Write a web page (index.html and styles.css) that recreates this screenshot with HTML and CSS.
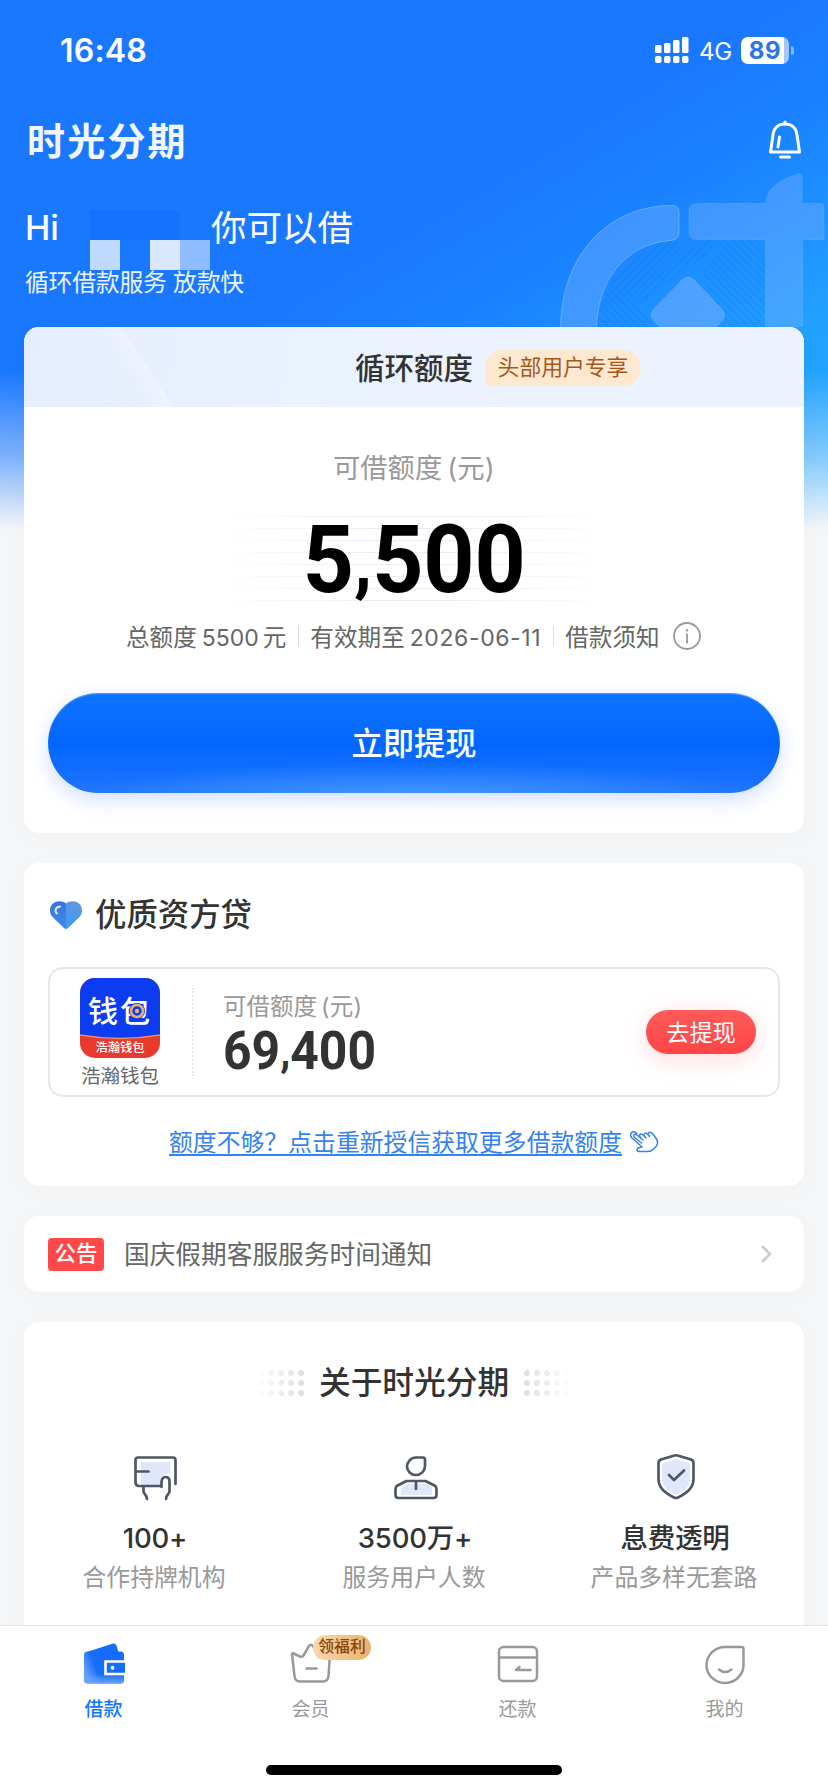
FILE: index.html
```html
<!DOCTYPE html>
<html lang="zh-CN">
<head>
<meta charset="utf-8">
<title>时光分期</title>
<link rel="stylesheet" href="styles.css">
</head>
<body>
<main class="screen">
  <div class="backdrop"></div>
  <svg class="hero-art" viewBox="558 170 270 157" width="270" height="157">
    <defs>
      <pattern id="hatchA" width="5.500" height="5.500" patternUnits="userSpaceOnUse" patternTransform="rotate(45)"><rect width="2.2" height="5.500" fill="#0b6ef5" opacity=".18"/></pattern>
      <pattern id="hatchB" width="5.500" height="5.500" patternUnits="userSpaceOnUse" patternTransform="rotate(-45)"><rect width="2.2" height="5.500" fill="#0b6ef5" opacity=".18"/></pattern>
    </defs>
    <path d="M612 285C626 258 648 242 675 241L727 240L636 306Z" fill="url(#hatchA)"/>
    <path d="M702 272L727 240H766V327H597C597 310 603 298 612 285L636 306L655 327H720Z" fill="url(#hatchB)"/>
    <g fill="#7fb2ff" fill-opacity=".38" stroke="#8cc4ff" stroke-opacity=".55">
      <path d="M560.500 330C560.500 258 605 206 672 205.500Q679 205.500 679 212V232Q679 240 670 240.500C626 244 596.500 280 596.500 330Z"/>
      <path d="M697 203.500H766C767 187 780 180 798 174Q802 173 802 178V203.500H820Q824 203.500 824 207V239.500H802.500V330H765.500V239.500H697Q689 239.500 689 232V211Q689 203.500 697 203.500Z" stroke-opacity=".25"/>
      <path d="M682 280Q688 274 694 280L722 309Q727 315 722 321L694 349H682L654 321Q648 315 654 309Z" fill-opacity=".5" stroke-opacity=".3"/>
    </g>
  </svg>

  <header class="status">
    <span class="clock">16:48</span>
    <div class="status-right">
      <svg width="34" height="28" viewBox="0 0 34 28" fill="#fff">
        <rect x="0" y="9" width="6.500" height="8" rx="1.500"/><rect x="9" y="7" width="6.500" height="10" rx="1.500"/><rect x="18" y="4" width="6.500" height="13" rx="1.500"/><rect x="27" y="1" width="6.500" height="16" rx="1.500"/>
        <rect x="0" y="20" width="6.500" height="7" rx="2"/><rect x="9" y="20" width="6.500" height="7" rx="2"/><rect x="18" y="20" width="6.500" height="7" rx="2"/><rect x="27" y="20" width="6.500" height="7" rx="2"/>
      </svg>
      <span class="net">4G</span>
      <div class="battery"><span>89</span></div>
      <i class="nub"></i>
    </div>
  </header>

  <div class="brand-row">
    <h1 class="brand">时光分期</h1>
    <svg width="34" height="42" viewBox="0 0 34 42" fill="none" stroke="#fff" stroke-width="3" stroke-linecap="round" stroke-linejoin="round">
      <path d="M17 2V4"/><path d="M17 4C9.500 4 5.500 9 5 15L2.500 32H31.500L29 15C28.500 9 24.500 4 17 4Z"/><path d="M11.500 17L10 27"/><path d="M12.500 37H21.500"/>
    </svg>
  </div>

  <div class="greeting">
    <span>Hi</span>
    <svg class="mask" width="120" height="60" viewBox="0 0 120 60">
      <rect width="90" height="30" fill="#1472ff"/><rect y="30" width="30" height="30" fill="#c0d9ff"/><rect x="60" y="30" width="30" height="30" fill="#d9e7ff"/><rect x="90" y="30" width="30" height="30" fill="#90bdff"/>
    </svg>
    <span class="can">你可以借</span>
  </div>
  <p class="slogan">循环借款服务 放款快</p>

  <div class="cards">
    <section class="card credit">
      <div class="credit-head">
        <h2>循环额度</h2><span class="tag">头部用户专享</span>
      </div>
      <p class="credit-label">可借额度<span class="paren">(元)</span></p>
      <div class="amount"><span>5<small>,</small>500</span></div>
      <div class="meta">
        <span>总额度<b>5500</b>元</span><i></i><span>有效期至<b class="date">2026-06-11</b></span><i></i><span>借款须知</span>
        <svg width="28" height="28" viewBox="0 0 28 28" fill="none" stroke="#999" stroke-width="1.800"><circle cx="14" cy="14" r="13"/><path d="M14 11.500V21.500M14 7V9.500"/></svg>
      </div>
      <button class="cta">立即提现</button>
    </section>

    <section class="card partner">
      <div class="partner-title">
        <svg width="34" height="30" viewBox="0 0 34 30">
          <defs>
            <linearGradient id="hl" x2="0" y2="1"><stop stop-color="#3676de"/><stop offset="1" stop-color="#3d8be8"/></linearGradient>
            <linearGradient id="hr" x2="0" y2="1"><stop stop-color="#6295e2"/><stop offset="1" stop-color="#3c9cf2"/></linearGradient>
          </defs>
          <path d="M17 3.500C13-.5 1 0 1 10.500C1 14 2.500 16 5 18.500L15 28Q16 29 17 29Z" fill="url(#hl)"/>
          <path d="M17 3.500C21-.5 33 0 33 10.500C33 14 31.500 16 29 18.500L19 28Q18 29 17 29Z" fill="url(#hr)"/>
          <path d="M11 6.500C6 7 5.500 11.500 8 13.500" fill="none" stroke="#dcebff" stroke-width="2" stroke-linecap="round"/>
        </svg>
        <h2>优质资方贷</h2>
      </div>
      <div class="offer">
        <div class="lender">
          <div class="logo">
            <svg class="logo-bg" width="80" height="80" viewBox="0 0 80 80"><rect width="80" height="80" fill="#e8392c"/><path d="M0 0H80V57Q40 64 0 57Z" fill="#0b3cf0"/><path d="M0 57Q40 64 80 57" fill="none" stroke="#f58a62" stroke-width="1.500"/></svg>
            <span class="logo-word">钱包</span>
            <span class="logo-name">浩瀚钱包</span>
            <svg class="coin" width="18" height="18" viewBox="0 0 18 18"><circle cx="9" cy="9" r="8" fill="#0b3cf0"/><circle cx="9" cy="9" r="6" fill="#0b3cf0" stroke="#e9b06b" stroke-width="2.600"/><circle cx="9" cy="9" r="2.200" fill="#e9b06b"/></svg>
          </div>
          <span class="lender-name">浩瀚钱包</span>
        </div>
        <i class="dotted"></i>
        <div class="offer-info">
          <p>可借额度<span class="paren">(元)</span></p>
          <strong>69<small>,</small>400</strong>
        </div>
        <button class="go">去提现</button>
      </div>
      <div class="more">
        <a>额度不够？点击重新授信获取更多借款额度</a>
        <svg width="30" height="24" viewBox="0 0 30 24" fill="none" stroke="#3482f0" stroke-width="1.500" stroke-linecap="round" stroke-linejoin="round">
          <path d="M12.500 13L5.500 7.500C3.500 5.500 5.500 3 8 5L14 10M12 8.500L10.500 6C10.500 3.500 12.500 3.500 14 5L17 8M15 5.500C15 2.500 17 2.500 19 4.500L20.500 6.500M19 4C20 1.500 22 2 23.500 3.500L26.500 7.500C29.500 11 29 14 27 16.500L24 19.500C22.500 21 21 21.500 19 21.500H10.500C7.500 21.500 7 18 10.500 17.500L13 17L2.500 7.500C0 4 3 .500 6.500 2.500L8 3.500"/>
        </svg>
      </div>
    </section>

    <section class="card notice">
      <span class="badge">公告</span>
      <span class="notice-text">国庆假期客服服务时间通知</span>
      <svg width="12" height="20" viewBox="0 0 12 20" fill="none" stroke="#ccc" stroke-width="2.500"><path d="M2 2L10 10L2 18"/></svg>
    </section>

    <section class="card about">
      <div class="about-title">
        <i class="dots dots-left"></i><h2>关于时光分期</h2><i class="dots"></i>
      </div>
      <div class="stats">
        <div class="stat">
          <svg width="48" height="48" viewBox="0 0 48 48" fill="none" stroke="#4d5864" stroke-width="2.700" stroke-linecap="round" stroke-linejoin="round">
            <path d="M9 9H38V20L32 22L28 33H9Z" fill="#e0e7fb" stroke="none"/>
            <path d="M43.500 31V7Q43.500 4.500 41 4.500H6Q3.500 4.500 3.500 7V29Q3.500 33 7 33H29.500M4 18.500H16.500M11.500 34V38C11.500 42 15 41 15 46M29.500 34V29C30 22.500 37.500 22.500 37.500 28V38C37.500 42 34 41 34 46"/>
          </svg>
          <strong>100+</strong><span>合作持牌机构</span>
        </div>
        <div class="stat">
          <svg width="48" height="48" viewBox="0 0 48 48" fill="none" stroke="#4d5864" stroke-width="2.700" stroke-linecap="round" stroke-linejoin="round">
            <path d="M9 35L15 31H34L40 35V42H9Z" fill="#e0e7fb" stroke="none"/>
            <path d="M24 4.500H31Q33 4.500 33 7V13C33 18 29 22 24 22S15 18 15 13.500S19 4.500 24 4.500ZM14.500 28H33.500L42.500 32.500Q44.500 33.500 44.500 36V42Q44.500 45 41.500 45H6.500Q3.500 45 3.500 42V36Q3.500 33.500 5.500 32.500ZM24 28V36"/>
          </svg>
          <strong>3500万+</strong><span>服务用户人数</span>
        </div>
        <div class="stat">
          <svg width="48" height="48" viewBox="0 0 48 48" fill="none" stroke="#4d5864" stroke-width="2.700" stroke-linecap="round" stroke-linejoin="round">
            <path d="M24 6L38 10.500V27C38 33 32 38 24 42C16 38 10 33 10 27V10.500Z" fill="#e0e7fb" stroke="none"/>
            <path d="M22.500 2.500Q24 2 25.500 2.500L39 6.500Q41.500 7.500 41.500 10V26C41.500 35 35 40 26 44.500Q24 45.500 22 44.500C13 40 6.500 35 6.500 26V10Q6.500 7.500 9 6.500Z"/>
            <path d="M17 22L22 27L32 17.500"/>
          </svg>
          <strong>息费透明</strong><span>产品多样无套路</span>
        </div>
      </div>
    </section>
  </div>
</main>

<nav class="tabs">
  <div class="tab-list">
    <div class="tab active">
      <svg width="44" height="44" viewBox="0 0 44 44">
        <defs>
          <linearGradient id="wl" x1="0" y1=".55" x2=".3" y2=".45"><stop stop-color="#649ffc"/><stop offset="1" stop-color="#146dfb"/></linearGradient>
          <linearGradient id="wb" x2="0" y2="1"><stop offset=".7" stop-color="#6aa3fb" stop-opacity="0"/><stop offset="1" stop-color="#6aa3fb"/></linearGradient>
        </defs>
        <path d="M5 10L31 1.500Q33.500 1 34.500 3.500L37 12H5Z" fill="#146dfb"/>
        <rect x="2" y="9.500" width="40" height="32" rx="3.500" fill="url(#wl)"/><rect x="2" y="9.500" width="40" height="32" rx="3.500" fill="url(#wb)"/>
        <path d="M43 19.500H23.500V32H43" fill="#146dfb" stroke="#fff" stroke-width="2.600"/><circle cx="30.500" cy="25.700" r="2" fill="#fff"/>
      </svg>
      <span>借款</span>
    </div>
    <div class="tab">
      <svg width="44" height="44" viewBox="0 0 44 44" fill="none" stroke="#999" stroke-width="2.500" stroke-linecap="round" stroke-linejoin="round">
        <path d="M3 12Q3 10.500 4.500 11.500L11 14.500Q13 15.500 14.500 13.500L20 4Q22 1.500 24 4L29 14Q30.500 16 33 15L39.500 11.500Q41 10.500 41 12L39.500 34Q39 39.500 34 39.500H11Q6 39.500 5.500 34ZM17.500 26.500H27.500"/>
      </svg>
      <em class="perk">领福利</em>
      <span>会员</span>
    </div>
    <div class="tab">
      <svg width="44" height="44" viewBox="0 0 44 44" fill="none" stroke="#999" stroke-width="2.500" stroke-linecap="round" stroke-linejoin="round">
        <rect x="3" y="5" width="38" height="34" rx="4.500"/><path d="M3 15.500H41M34.500 28H20L23.500 25"/>
      </svg>
      <span>还款</span>
    </div>
    <div class="tab">
      <svg width="44" height="44" viewBox="0 0 44 44" fill="none" stroke="#999" stroke-width="2.500" stroke-linecap="round" stroke-linejoin="round">
        <path d="M22 5H38.500Q40.500 5 40.500 7V22.500A18.500 18 0 1 1 22 5ZM16 27.500Q22 32.500 28.500 27.500"/>
      </svg>
      <span>我的</span>
    </div>
  </div>
  <div class="home-bar"></div>
</nav>
</body>
</html>
```
FILE: styles.css
```css
* { box-sizing: border-box; margin: 0; padding: 0; }
body {
  width: 828px; height: 1792px; overflow: hidden;
  display: flex; flex-direction: column;
  font-family: Inter, "Noto Sans CJK SC", sans-serif;
  background: #f5f6f8; color: #333;
}
svg { display: block; flex: none; }
i, em { font-style: normal; }
h1, h2 { font-weight: 500; }
button { border: 0; font-family: inherit; color: #fff; display: block; }
small { font-size: .82em; display: inline-block; transform: translateY(-.06em); }

.screen { position: relative; height: 1625px; overflow: hidden; flex: none; }
.backdrop {
  position: absolute; inset: 0 0 auto 0; height: 530px;
  background:
    linear-gradient(180deg, rgba(245,246,248,0) 70%, rgba(245,246,248,.45) 86%, #f5f6f8 100%),
    linear-gradient(149deg, #1a78ff 0%, #1a78ff 46%, #1b84ff 60%, #22a2ff 80%, #22a6ff 100%);
}
.hero-art { position: absolute; left: 558px; top: 170px; }
.status, .brand-row, .greeting, .slogan, .cards { position: relative; }

.status { height: 100px; padding: 0 34px 0 60px; display: flex; align-items: center; justify-content: space-between; color: #fff; }
.clock { font-size: 32px; font-weight: 600; letter-spacing: .2px; }
.status-right { display: flex; align-items: center; }
.net { font-size: 24px; margin: 2px 0 0 10px; width: 42px; letter-spacing: -.3px; }
.battery {
  width: 48px; height: 27px; border-radius: 7px; display: flex; align-items: center; justify-content: center;
  background: linear-gradient(90deg, #fff 43px, #a3c8ff 43px); color: #2e74e6;
  font-weight: 700; font-size: 24px; line-height: 27px; letter-spacing: .6px;
}
.nub { width: 3px; height: 9px; margin-left: 2px; border-radius: 0 4px 4px 0; background: #82b5ff; }

.brand-row { height: 82px; padding: 0 26px 0 27px; display: flex; align-items: center; justify-content: space-between; color: #f2f7ff; }
.brand { font-size: 38px; font-weight: 700; line-height: 48px; letter-spacing: 2.200px; }

.greeting { height: 88px; padding: 0 25px; display: flex; color: #fff; font-size: 34px; line-height: 92px; font-weight: 500; }
.greeting .can { font-size: 35.500px; line-height: 93px; font-weight: 400; }
.mask { margin: 28px 1px 0 31px; }
.slogan { margin-top: -1px; height: 58px; padding-left: 25px; color: #eaf3ff; font-size: 23.800px; line-height: 28px; letter-spacing: -.2px; }

.cards { display: flex; flex-direction: column; gap: 30px; padding: 0 24px; }
.card { background: #fff; border-radius: 15px; box-shadow: 0 4px 24px rgba(30,40,60,.025); overflow: hidden; }

.credit { height: 506px; }
.credit-head {
  height: 80px; display: flex; align-items: center; padding: 2px 0 0 331px;
  background:
    linear-gradient(57deg, transparent 104px, rgba(255,255,255,.3) 124px, transparent 126px),
    linear-gradient(100deg, #e5eefd, #ebf2ff 40%, #edf2fe);
}
.credit-head h2 { font-size: 29.500px; line-height: 44px; }
.tag { margin-left: 12px; width: 156px; height: 36px; line-height: 35px; text-align: center; font-size: 21.800px; color: #a3581a; background: #ffe8d0; border-radius: 18px 18px 18px 4px; }
.credit-label { text-align: center; color: #999; font-size: 27.300px; line-height: 36px; margin-top: 44px; }
.paren { margin-left: 5px; letter-spacing: .2px; }
.amount {
  width: 404px; height: 86px; margin: 29px auto 0; display: flex; justify-content: center; align-items: center;
  background:
    linear-gradient(90deg, #fff, transparent 45%, transparent 55%, #fff),
    repeating-linear-gradient(180deg, #ebebf5 0 1px, transparent 1px 12px);
}
.amount span { font-family: Roboto, sans-serif; font-weight: 700; font-size: 94px; line-height: 86px; color: #000; transform: translateY(4px) scaleX(.95); }
.meta { display: flex; align-items: center; height: 30px; margin: 19px 0 0 102px; font-size: 23.600px; color: #666; white-space: nowrap; }
.meta b { font-weight: 400; margin: 0 4px 0 5px; font-size: 23px; }
.meta .date { margin-right: 0; letter-spacing: .6px; }
.meta i { width: 1px; height: 20px; background: #ddd; margin: 0 11.500px; }
.meta svg { margin: 0 0 0 13px; }
.cta {
  width: 732px; height: 100px; margin: 42px auto 0; padding-bottom: 4px; border-radius: 50px; font-size: 31.300px; font-weight: 500;
  background: radial-gradient(ellipse 48% 34% at 50% 104%, rgba(72,155,255,.9), rgba(72,155,255,0)), linear-gradient(180deg, #0d73ff, #0466ff 52%, #1f75ff);
  box-shadow: 0 7px 20px rgba(30,90,255,.2), inset 0 1px 1px rgba(130,190,255,.6);
}

.partner { height: 323px; padding: 30px 24px 0; }
.partner-title { display: flex; align-items: center; gap: 12px; height: 44px; padding-left: 1px; }
.partner-title h2 { font-size: 31.400px; line-height: 44px; }
.offer { height: 130px; margin-top: 30px; border: 2px solid #e6e6e6; border-radius: 15px; display: flex; align-items: center; padding: 0 22px 0 30px; }
.lender { width: 80px; align-self: stretch; padding-top: 9px; }
.logo {
  position: relative; height: 80px; border-radius: 15px; overflow: hidden; color: #fff;
  display: flex; flex-direction: column; align-items: center;
}
.logo-bg { position: absolute; left: 0; top: 0; }
.logo-word { position: relative; font-size: 30px; font-weight: 500; line-height: 32px; margin-top: 17px; letter-spacing: 2px; }
.logo-name { position: relative; font-size: 12.300px; line-height: 18px; margin-top: 12px; font-weight: 500; }
.coin { position: absolute; left: 48px; top: 24px; }
.lender-name { display: block; text-align: center; font-size: 19.500px; line-height: 28px; margin: 4px -4px 0; color: #666; white-space: nowrap; }
.dotted { height: 88px; border-left: 2px dotted #e8e8e8; margin-left: 32px; }
.offer-info { margin-left: 29px; flex: 1; }
.offer-info p { font-size: 23.500px; line-height: 30px; color: #999; padding-top: 9px; }
.offer-info .paren { margin-left: 4px; }
.offer-info strong { display: block; font-family: Roboto, sans-serif; font-weight: 700; font-size: 53px; line-height: 56px; color: #333; transform: translateY(1px) scaleX(.94); transform-origin: 0 0; }
.go { width: 110px; height: 44px; margin-top: -1px; padding-bottom: 2px; border-radius: 22px; font-size: 23.200px; background: linear-gradient(180deg, #ff5a5a, #ff4545); box-shadow: 0 6px 24px rgba(255,80,80,.2); }
.more { display: flex; align-items: center; justify-content: center; gap: 7px; margin-top: 29px; height: 32px; }
.more a { color: #3482f0; font-size: 23.850px; line-height: 29px; height: 28px; border-bottom: 2px solid #3482f0; }

.notice { height: 76px; padding: 0 32px 0 24px; display: flex; align-items: center; }
.badge { width: 56px; height: 33px; line-height: 31px; border-radius: 4px; background: #ff4949; color: #fff; text-align: center; font-size: 21.500px; font-weight: 500; }
.notice-text { margin: -4px 0 0 20px; flex: 1; font-size: 25.700px; color: #666; }

.about { height: 360px; padding-top: 39px; }
.about-title { display: flex; align-items: center; justify-content: center; gap: 13px; height: 44px; }
.about-title h2 { font-size: 31.700px; line-height: 44px; }
.dots { width: 50px; height: 30px; background: radial-gradient(circle, #ddd 2.700px, transparent 3.300px) 0 0 / 10px 10px; -webkit-mask: linear-gradient(90deg, #000, transparent); mask: linear-gradient(90deg, #000, transparent); }
.dots-left { transform: scaleX(-1); }
.stats { display: flex; margin-top: 48px; }
.stat { flex: 1; display: flex; flex-direction: column; align-items: center; }
.stat svg { margin-left: 4px; }
.stat strong { font-size: 27.500px; font-weight: 500; line-height: 40px; margin-top: 17px; color: #333; letter-spacing: -.2px; padding-left: 2px; }
.stat span { font-size: 23.850px; line-height: 34px; margin-top: 3px; color: #999; }

.tabs { height: 167px; flex: none; background: #fff; border-top: 1px solid #e3e3e3; position: relative; }
.tab-list { display: flex; padding-top: 16px; height: 139px; }
.tab { flex: 1; position: relative; display: flex; flex-direction: column; align-items: center; color: #999; font-size: 19px; }
.tab span { line-height: 28px; margin-top: 10px; }
.active { color: #1476ff; font-weight: 500; }
.perk { position: absolute; left: 106px; top: -7px; width: 58px; height: 25px; line-height: 24px; border-radius: 13px; text-align: center; font-size: 15.800px; font-weight: 500; color: #8a4510; background: linear-gradient(90deg, #fbd9ae, #e7b36c); }
.home-bar { width: 296px; height: 10px; margin: 0 auto; border-radius: 5px; background: #000; }
```
